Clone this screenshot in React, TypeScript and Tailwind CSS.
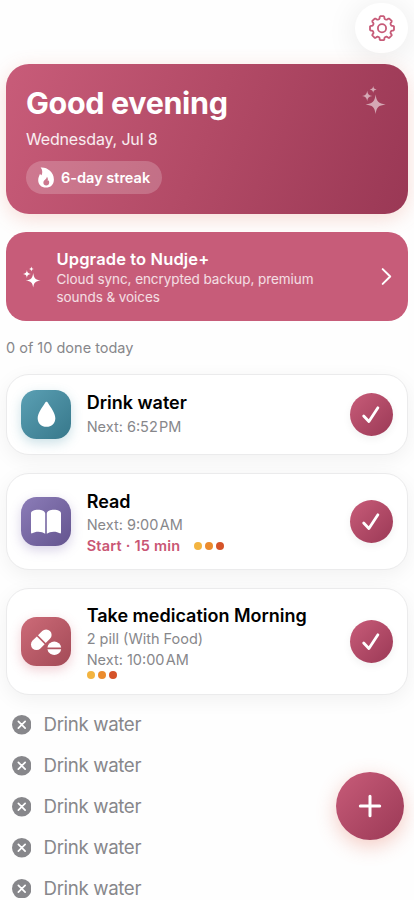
import type { ReactNode } from "react";

function gearPath(cx: number, cy: number) {
  const points: string[] = [];
  for (let i = 0; i < 8; i++) {
    const base = (i * Math.PI) / 4;
    const steps: [number, number][] = [
      [-0.34, 9.5],
      [-0.27, 9.8],
      [-0.225, 10.5],
      [-0.21, 11.4],
      [-0.14, 12.1],
      [0.14, 12.1],
      [0.21, 11.4],
      [0.225, 10.5],
      [0.27, 9.8],
      [0.34, 9.5],
    ];
    for (const [a, r] of steps) {
      points.push(`${(cx + r * Math.sin(base + a)).toFixed(2)} ${(cy - r * Math.cos(base + a)).toFixed(2)}`);
    }
  }
  return `M${points.join("L")}Z`;
}

function Gear() {
  return (
    <svg width="28" height="28" viewBox="0 0 28 28" fill="none" stroke="#c75b78" strokeWidth="1.8" strokeLinejoin="round">
      <path d={gearPath(14, 14.2)} />
      <circle cx="14" cy="14.2" r="4.1" />
    </svg>
  );
}

function Sparkles({ className }: { className: string }) {
  return (
    <svg viewBox="0 0 24 28" className={className} fill="currentColor">
      <path d="M13.6 8.600C14.600 15.800 16.400 17.600 23.600 18.500C16.400 19.400 14.600 21.200 13.600 28C12.600 21.200 10.800 19.400 3.600 18.500C10.800 17.600 12.600 15.800 13.600 8.600Z" />
      <path d="M5.200 4.800C5.700 8.400 6.800 9.400 10.400 10C6.800 10.600 5.700 11.600 5.200 15.200C4.700 11.600 3.600 10.600 0 10C3.600 9.400 4.700 8.400 5.200 4.800Z" />
      <path d="M11.200 0C11.600 2.300 12.300 3.000 14.600 3.400C12.300 3.800 11.600 4.500 11.200 6.800C10.800 4.500 10.100 3.800 7.800 3.400C10.100 3.000 10.800 2.300 11.200 0Z" />
    </svg>
  );
}

function Flame() {
  return (
    <svg width="16" height="21" viewBox="0 0 16 21" className="shrink-0">
      <path
        fill="white"
        fillRule="evenodd"
        d="M2.600.6C8.500-.2 15.900 4.700 15.900 12.400C15.900 17.400 12.600 20.600 8 20.600C3.400 20.600.2 17.500.2 13.200C.2 10.400 1.300 8.500 2 6.700C2.400 7.500 2.900 8 3.500 8.300C4.700 5.800 4.500 2.800 2.600.6ZM8.800 9.800C9.100 12.100 5.400 13 5.400 15.700C5.400 17.400 6.600 18.500 8.200 18.500C9.900 18.500 11.200 17.300 11.200 15.500C11.200 14.600 11 13.900 10.500 13.200C10.300 13.700 10 13.900 9.700 14.100C10.100 12.500 9.900 10.800 8.800 9.800Z"
      />
    </svg>
  );
}

function Drop() {
  return (
    <svg width="19" height="27" viewBox="0 0 20 28" fill="white">
      <path d="M10 .7C10.700.7 11.100 1.200 11.600 2C14.400 6.600 19.300 12.300 19.300 18C19.300 23.300 15.300 27 10 27C4.700 27 .7 23.300.7 18C.7 12.300 5.600 6.600 8.400 2C8.900 1.200 9.300.7 10 .7Z" />
    </svg>
  );
}

function Book() {
  return (
    <svg width="32" height="26" viewBox="0 0 32 26" fill="white">
      <path d="M1 4.200C1 2.200 4.200.8 8 .8C11.800.8 15.200 2.300 15.200 4.500V24.800C13.400 23.500 11 22.700 8.300 22.700C5.800 22.700 3.800 23.300 2.200 24.200C1.500 24.600 1 24.300 1 23.600Z" />
      <path d="M31 4.200C31 2.200 27.800.8 24 .8C20.200.8 16.800 2.300 16.800 4.500V24.800C18.600 23.500 21 22.700 23.700 22.700C26.200 22.700 28.200 23.300 29.800 24.200C30.500 24.600 31 24.300 31 23.600Z" />
    </svg>
  );
}

function Pills() {
  return (
    <svg width="32" height="28" viewBox="0 0 32 28" fill="white">
      <g transform="translate(11.300 11.700) rotate(-45)">
        <path d="M-.8-5.500V5.500H-6.800A5.500 5.500 0 0 1-6.800-5.500Z" />
        <path d="M.8-5.500V5.500H6.800A5.500 5.500 0 0 0 6.800-5.500Z" />
      </g>
      <path d="M17.400 19.400A7 7 0 0 1 31.200 19.400Z" />
      <path d="M17.400 21.200A7 7 0 0 0 31.200 21.200Z" />
    </svg>
  );
}

function CheckButton() {
  return (
    <div className="mr-[14.500px] ml-auto flex size-[43px] shrink-0 items-center justify-center self-center rounded-full bg-linear-to-br from-[#c85c79] to-[#9b3956] shadow-[0_3px_9px_rgba(0,0,0,0.06)]">
      <svg width="20" height="20" viewBox="0 0 20 20" fill="none" stroke="white" strokeWidth="2.800" strokeLinecap="round" strokeLinejoin="round">
        <path d="M2.700 11L7.900 16.500L16.900 2.800" />
      </svg>
    </div>
  );
}

function Dots({ className }: { className: string }) {
  return (
    <div className={`flex gap-[3px] ${className}`}>
      <i className="size-2 rounded-full bg-[#f3b440]" />
      <i className="size-2 rounded-full bg-[#eb8b2d]" />
      <i className="size-2 rounded-full bg-[#d55329]" />
    </div>
  );
}

function HabitCard({ className, tile, icon, children }: { className: string; tile: string; icon: ReactNode; children: ReactNode }) {
  return (
    <section className={`flex rounded-[23px] border border-[#ebebec] bg-white shadow-[0_5px_20px_rgba(0,0,0,0.055)] ${className}`}>
      <div className={`ml-[14.400px] flex size-[49.500px] shrink-0 items-center justify-center self-center rounded-[15.500px] bg-linear-to-br ${tile}`}>{icon}</div>
      <div className="ml-[15.800px] pt-4">{children}</div>
      <CheckButton />
    </section>
  );
}

function Title({ children }: { children: ReactNode }) {
  return <h2 className="text-[18px] leading-6 font-semibold whitespace-nowrap text-black">{children}</h2>;
}

function Meta({ className, children }: { className: string; children: ReactNode }) {
  return <p className={`text-[14.500px] leading-[21px] whitespace-nowrap text-[#87878b] ${className}`}>{children}</p>;
}

export default function App() {
  return (
    <main className="relative h-[900px] w-[414px] overflow-hidden bg-[#fefefe] px-[6px] pt-[3px] font-['Inter','Liberation_Sans',sans-serif]">
      <div className="ml-auto flex h-[50px] w-[53.500px] items-center justify-center rounded-[25px] bg-white pl-px shadow-[0_4px_32px_rgba(0,0,0,0.09)]">
        <Gear />
      </div>

      <header className="relative mt-[11px] flex h-[150px] justify-between rounded-[23px] bg-linear-110 from-[#c85c79] via-[#b24a66] to-[#9a3855] px-5 pt-5 text-white shadow-[0_5px_20px_rgba(225,110,80,0.23)]">
        <div>
          <h1 className="text-[30.500px] leading-[38px] font-bold tracking-[-0.350px] whitespace-nowrap">Good evening</h1>
          <p className="mt-[6px] text-[16px] leading-[22px] tracking-[-0.170px] whitespace-nowrap text-white/90">Wednesday, Jul 8</p>
          <div className="mt-[11px] flex h-[33px] w-[136px] items-center gap-[7px] rounded-full bg-white/20 pl-3">
            <Flame />
            <span className="text-[14.500px] leading-5 font-semibold whitespace-nowrap">6-day streak</span>
          </div>
        </div>
        <Sparkles className="mt-[2px] mr-[2px] h-[28px] w-[24px] text-white/55" />
      </header>

      <section className="relative mt-[18px] flex h-[89px] rounded-[20px] bg-[#c75c79] text-white">
        <Sparkles className="mt-[33.500px] ml-[17px] h-[22px] w-[18px] shrink-0" />
        <div className="ml-[15.500px] pt-4">
          <h2 className="text-[16.500px] leading-[22px] font-semibold tracking-[0.120px] whitespace-nowrap">Upgrade to Nudje+</h2>
          <p className="text-[13.500px] leading-[18px] tracking-[-0.060px] whitespace-nowrap text-white/80">
            Cloud sync, encrypted backup, premium
            <br />
            sounds &amp; voices
          </p>
        </div>
        <svg className="mt-[35px] mr-[15px] ml-auto" width="13" height="19" viewBox="0 0 13 19" fill="none" stroke="white" strokeWidth="2" strokeLinecap="round" strokeLinejoin="round">
          <path d="M2.700 2.100L10.200 9.500L2.700 16.900" />
        </svg>
      </section>

      <p className="mt-4 text-[14.500px] leading-[21px] whitespace-nowrap text-[#87878b]">0 of 10 done today</p>

      <div className="mt-4 flex flex-col gap-[18px]">
        <HabitCard className="h-[81px]" tile="from-[#5ba0b4] to-[#37788b] shadow-[0_4px_12px_rgba(65,145,165,0.28)]" icon={<Drop />}>
          <Title>Drink water</Title>
          <Meta className="mt-px">Next: 6:52&#8202;PM</Meta>
        </HabitCard>
        <HabitCard className="h-[97px]" tile="from-[#8c7db8] to-[#64548f] shadow-[0_4px_12px_rgba(115,95,170,0.28)]" icon={<Book />}>
          <Title>Read</Title>
          <Meta className="">Next: 9:00&#8202;AM</Meta>
          <div className="flex items-center">
            <p className="text-[14.500px] leading-[21px] font-semibold tracking-[0.220px] whitespace-nowrap text-[#c95674]">Start · 15 min</p>
            <Dots className="ml-[13.500px]" />
          </div>
        </HabitCard>
        <HabitCard className="h-[107px]" tile="from-[#cd6b78] to-[#a34a57] shadow-[0_4px_12px_rgba(205,85,105,0.28)]" icon={<Pills />}>
          <div className="-mt-px">
            <Title>Take medication Morning</Title>
            <Meta className="">2 pill (With Food)</Meta>
            <Meta className="">Next: 10:00&#8202;AM</Meta>
            <Dots className="mt-px" />
          </div>
        </HabitCard>
      </div>

      <ul className="mt-[9.700px]">
        {[0, 1, 2, 3, 4].map((row) => (
          <li key={row} className="flex h-[40.900px] items-center pl-[5.500px]">
            <svg width="19.500" height="19.500" viewBox="0 0 19 19">
              <circle cx="9.500" cy="9.500" r="9.500" fill="#87878b" />
              <path d="M6.200 6.200L12.800 12.800M12.800 6.200L6.200 12.800" stroke="white" strokeWidth="1.700" strokeLinecap="round" />
            </svg>
            <span className="ml-[12.500px] text-[18.700px] leading-6 tracking-[-0.360px] whitespace-nowrap text-[#87878b]">Drink water</span>
          </li>
        ))}
      </ul>

      <button className="absolute top-[771.500px] left-[336px] flex size-[68px] items-center justify-center rounded-full bg-linear-to-br from-[#c85c79] to-[#9b3956] shadow-[0_6px_20px_rgba(225,100,75,0.33)]">
        <svg width="24" height="24" viewBox="0 0 24 24" stroke="white" strokeWidth="3" strokeLinecap="round">
          <path d="M12 2.300V21.700M2.300 12H21.700" />
        </svg>
      </button>
    </main>
  );
}
